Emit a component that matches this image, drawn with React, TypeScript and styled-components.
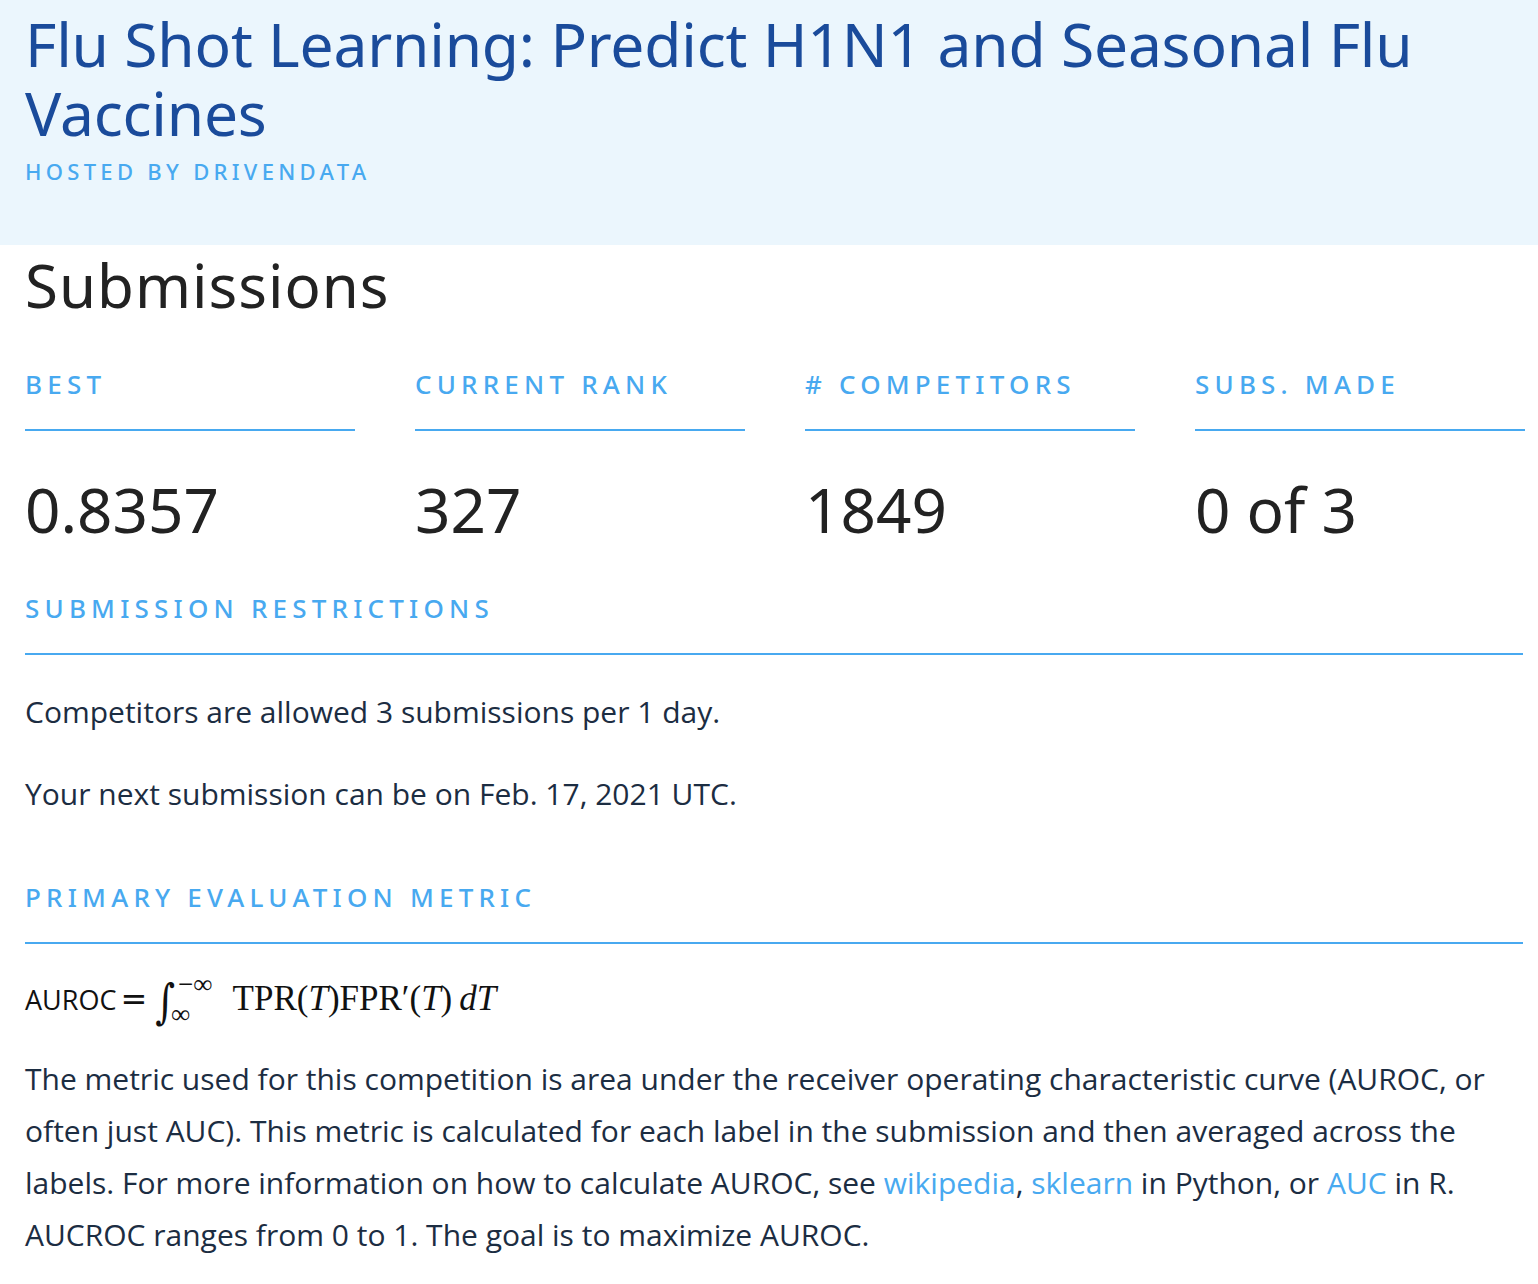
import React from "react";
import styled, { createGlobalStyle } from "styled-components";

const Global = createGlobalStyle`
  html, body { margin: 0; padding: 0; background: #ffffff; }
  body { font-family: "Open Sans", "Noto Sans", sans-serif; color: #1c2d42; }
`;

const Header = styled.header`
  background: #ebf6fd;
  height: 245px;
  box-sizing: border-box;
  padding: 9px 25px 0 25px;
`;

const Title = styled.h1`
  margin: 0;
  font-family: "Noto Sans", sans-serif;
  font-weight: 400;
  font-size: 60.5px;
  line-height: 69px;
  color: #1a4b9b;
  letter-spacing: -0.2px;
`;

const Hosted = styled.div`
  margin-top: 9px;
  font-family: "Noto Sans", sans-serif;
  font-size: 22px;
  letter-spacing: 4.3px;
  color: #48a9f0;
  text-transform: uppercase;
  font-weight: 500;
`;

const Main = styled.main`
  padding: 0 15px 30px 25px;
`;

const PageHeading = styled.h2`
  margin: 0;
  padding-top: 4px;
  font-family: "Noto Sans", sans-serif;
  font-weight: 400;
  font-size: 60px;
  line-height: 72px;
  letter-spacing: 1px;
  color: #222;
`;

const Stats = styled.div`
  display: grid;
  grid-template-columns: repeat(4, 330px);
  column-gap: 60px;
  margin-top: 46px;
`;

const Stat = styled.div`
  display: flex;
  flex-direction: column;
`;

const Label = styled.div`
  font-family: "Noto Sans", sans-serif;
  font-size: 26px;
  letter-spacing: 5.2px;
  font-weight: 500;
  color: #48a9f0;
  text-transform: uppercase;
  line-height: 34px;
  padding-bottom: 28px;
  border-bottom: 2px solid #48a9f0;
`;

const Value = styled.div`
  font-family: "Noto Sans", sans-serif;
  font-size: 62px;
  font-weight: 400;
  color: #222;
  line-height: 80px;
  margin-top: 38px;
`;

const Section = styled.section<{ $top: number }>`
  margin-top: ${(p) => p.$top}px;
`;

const Para = styled.p`
  margin: 0;
  font-family: "Open Sans", "Noto Sans", sans-serif;
  font-size: 30px;
  line-height: 52px;
  color: #1c2d42;
`;

const Spaced = styled.div`
  display: flex;
  flex-direction: column;
  gap: 30px;
  margin-top: 31px;
`;

const Formula = styled.div`
  margin-top: 29px;
  display: flex;
  align-items: center;
  height: 52px;
  color: #111;
`;

const Sans = styled.span`
  font-family: "Open Sans", sans-serif;
  font-size: 27px;
`;

const MathText = styled.span<{ $italic?: boolean }>`
  font-family: "Liberation Serif", "DejaVu Serif", serif;
  font-size: 35px;
  font-style: ${(p) => (p.$italic ? "italic" : "normal")};
`;

const Eq = styled.span`
  font-family: "DejaVu Sans", sans-serif;
  font-size: 32px;
  margin: 0 8px 0 4px;
`;

const Integral = styled.span`
  display: inline-flex;
  align-items: center;
  margin-right: 20px;
`;

const IntSign = styled.span`
  font-family: "DejaVu Serif", serif;
  font-style: italic;
  font-size: 38px;
  display: inline-block;
  transform: scaleY(1.25) translateY(2px);
`;

const Limits = styled.span`
  display: inline-flex;
  flex-direction: column;
  font-family: "Liberation Serif", "DejaVu Serif", serif;
  font-size: 27px;
  line-height: 24px;
  margin-left: 3px;
`;

const Lower = styled.span`
  margin-left: -7px;
  margin-top: 6px;
`;

const Link = styled.a`
  color: #48a9f0;
  text-decoration: none;
`;

const Body = styled(Para)`
  margin-top: 28px;
`;

const stats = [
  { label: "Best", value: "0.8357" },
  { label: "Current Rank", value: "327" },
  { label: "# Competitors", value: "1849" },
  { label: "Subs. Made", value: "0 of 3" },
];

export default function App() {
  return (
    <>
      <Global />
      <Header>
        <Title>Flu Shot Learning: Predict H1N1 and Seasonal Flu Vaccines</Title>
        <Hosted>Hosted by DrivenData</Hosted>
      </Header>
      <Main>
        <PageHeading>Submissions</PageHeading>
        <Stats>
          {stats.map((s) => (
            <Stat key={s.label}>
              <Label>{s.label}</Label>
              <Value>{s.value}</Value>
            </Stat>
          ))}
        </Stats>
        <Section $top={42}>
          <Label>Submission Restrictions</Label>
          <Spaced>
            <Para>Competitors are allowed 3 submissions per 1 day.</Para>
            <Para>Your next submission can be on Feb. 17, 2021 UTC.</Para>
          </Spaced>
        </Section>
        <Section $top={60}>
          <Label>Primary Evaluation Metric</Label>
          <Formula>
            <Sans>AUROC</Sans>
            <Eq>=</Eq>
            <Integral>
              <IntSign>∫</IntSign>
              <Limits>
                <span>−∞</span>
                <Lower>∞</Lower>
              </Limits>
            </Integral>
            <MathText>TPR(</MathText>
            <MathText $italic>T</MathText>
            <MathText>)FPR′(</MathText>
            <MathText $italic>T</MathText>
            <MathText>)&thinsp;</MathText>
            <MathText $italic>dT</MathText>
          </Formula>
          <Body>
            The metric used for this competition is area under the receiver operating characteristic curve (AUROC, or
            often just AUC). This metric is calculated for each label in the submission and then averaged across the
            labels. For more information on how to calculate AUROC, see <Link href="#">wikipedia</Link>,{" "}
            <Link href="#">sklearn</Link> in Python, or <Link href="#">AUC</Link> in R. AUCROC ranges from 0 to 1. The
            goal is to maximize AUROC.
          </Body>
        </Section>
      </Main>
    </>
  );
}
